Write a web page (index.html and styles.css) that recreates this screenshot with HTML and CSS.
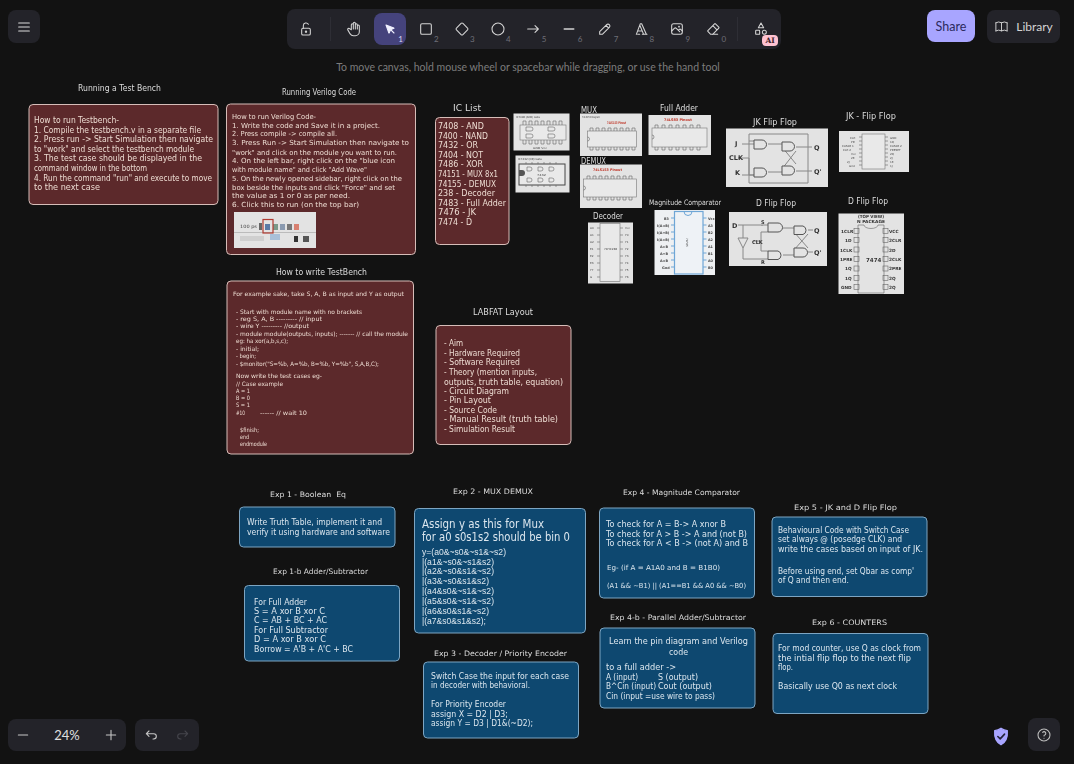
FILE: index.html
```html
<!DOCTYPE html>
<html lang="en">
<head>
<meta charset="utf-8">
<title>Whiteboard</title>
<link rel="stylesheet" href="styles.css">
</head>
<body>
<div class="app">
<svg class="canvas" width="1074" height="764" viewBox="0 0 1074 764">
  <!-- red note boxes -->
  <rect class="red" x="29" y="104.500" width="189" height="100" rx="4"/>
  <rect class="red" x="226.500" y="104" width="189" height="150.500" rx="4"/>
  <rect class="red" x="227" y="281" width="186.500" height="173" rx="4"/>
  <rect class="red" x="436" y="325.500" width="135" height="119" rx="4"/>
  <rect class="red" x="435.500" y="117.500" width="73.500" height="127" rx="4"/>
  <!-- blue note boxes -->
  <rect class="blue" x="239.500" y="507" width="155.500" height="40" rx="4"/>
  <rect class="blue" x="244.500" y="585.500" width="155" height="75.500" rx="4"/>
  <rect class="blue" x="414.500" y="508.500" width="171" height="124.500" rx="4"/>
  <rect class="blue" x="423.500" y="662" width="155" height="76" rx="4"/>
  <rect class="blue" x="599.500" y="508" width="155" height="90" rx="4"/>
  <rect class="blue" x="600" y="628" width="155" height="80" rx="4"/>
  <rect class="blue" x="772" y="517" width="155" height="79.500" rx="4"/>
  <rect class="blue" x="773" y="633.500" width="155" height="80" rx="4"/>

  <!-- headings -->
  <g class="lab">
    <text x="78" y="91" textLength="83" lengthAdjust="spacingAndGlyphs">Running a Test Bench</text>
    <text x="282" y="95" textLength="74" lengthAdjust="spacingAndGlyphs">Running Verilog Code</text>
    <text x="276" y="275" textLength="91" lengthAdjust="spacingAndGlyphs">How to write TestBench</text>
    <text x="473" y="315" textLength="60" lengthAdjust="spacingAndGlyphs">LABFAT Layout</text>
    <text x="453" y="111" textLength="28" lengthAdjust="spacingAndGlyphs">IC List</text>
    <text x="581" y="113" textLength="16" lengthAdjust="spacingAndGlyphs">MUX</text>
    <text x="581" y="164" textLength="25" lengthAdjust="spacingAndGlyphs">DEMUX</text>
    <text x="660" y="111" textLength="38" lengthAdjust="spacingAndGlyphs">Full Adder</text>
    <text x="593" y="219" textLength="30" lengthAdjust="spacingAndGlyphs">Decoder</text>
    <text x="649" y="205" textLength="72" lengthAdjust="spacingAndGlyphs" class="sm">Magnitude Comparator</text>
    <text x="753" y="125" textLength="44" lengthAdjust="spacingAndGlyphs">JK Flip Flop</text>
    <text x="846" y="119" textLength="50" lengthAdjust="spacingAndGlyphs">JK - Flip Flop</text>
    <text x="756" y="206" textLength="40" lengthAdjust="spacingAndGlyphs">D Flip Flop</text>
    <text x="848" y="204" textLength="40" lengthAdjust="spacingAndGlyphs">D Flip Flop</text>
    <text x="270" y="497" textLength="76" lengthAdjust="spacingAndGlyphs" class="sm">Exp 1 - Boolean  Eq</text>
    <text x="273" y="574" textLength="95" lengthAdjust="spacingAndGlyphs" class="sm">Exp 1-b Adder/Subtractor</text>
    <text x="453" y="494" textLength="80" lengthAdjust="spacingAndGlyphs" class="sm">Exp 2 - MUX DEMUX</text>
    <text x="434" y="656" textLength="133" lengthAdjust="spacingAndGlyphs" class="sm">Exp 3 - Decoder / Priority Encoder</text>
    <text x="623" y="495" textLength="117" lengthAdjust="spacingAndGlyphs" class="sm">Exp 4 - Magnitude Comparator</text>
    <text x="794" y="510" textLength="103" lengthAdjust="spacingAndGlyphs" class="sm">Exp 5 - JK and D Flip Flop</text>
    <text x="610" y="620" textLength="136" lengthAdjust="spacingAndGlyphs" class="sm">Exp 4-b - Parallel Adder/Subtractor</text>
    <text x="812" y="625" textLength="75" lengthAdjust="spacingAndGlyphs" class="sm">Exp 6 - COUNTERS</text>
  </g>

  <!-- Running a Test Bench -->
  <g class="rt f8">
    <text x="34" y="122.500" textLength="85" lengthAdjust="spacingAndGlyphs">How to run Testbench-</text>
    <text x="34" y="132.500" textLength="167" lengthAdjust="spacingAndGlyphs">1. Compile the testbench.v in a separate file</text>
    <text x="34" y="142" textLength="179" lengthAdjust="spacingAndGlyphs">2. Press run -&gt; Start Simulation then navigate</text>
    <text x="34" y="151.500" textLength="160" lengthAdjust="spacingAndGlyphs">to "work" and select the testbench module</text>
    <text x="34" y="161" textLength="168" lengthAdjust="spacingAndGlyphs">3. The test case should be displayed in the</text>
    <text x="34" y="170.500" textLength="113" lengthAdjust="spacingAndGlyphs">command window in the bottom</text>
    <text x="34" y="180.500" textLength="178" lengthAdjust="spacingAndGlyphs">4. Run the command "run" and execute to move</text>
    <text x="34" y="190" textLength="66" lengthAdjust="spacingAndGlyphs">to the next case</text>
  </g>

  <!-- Running Verilog Code -->
  <g class="rt f7">
    <text x="232" y="118.500" textLength="84" lengthAdjust="spacingAndGlyphs">How to run Verilog Code-</text>
    <text x="232" y="127.500" textLength="148" lengthAdjust="spacingAndGlyphs">1. Write the code and Save it in a project.</text>
    <text x="232" y="136" textLength="105" lengthAdjust="spacingAndGlyphs">2. Press compile -&gt; compile all.</text>
    <text x="232" y="145" textLength="177" lengthAdjust="spacingAndGlyphs">3. Press Run -&gt; Start Simulation then navigate to</text>
    <text x="232" y="154.500" textLength="165" lengthAdjust="spacingAndGlyphs">"work" and click on the module you want to run.</text>
    <text x="232" y="163" textLength="163" lengthAdjust="spacingAndGlyphs">4. On the left bar, right click on the "blue icon</text>
    <text x="232" y="172" textLength="135" lengthAdjust="spacingAndGlyphs">with module name" and click "Add Wave"</text>
    <text x="232" y="181" textLength="170" lengthAdjust="spacingAndGlyphs">5. On the newly opened sidebar, right click on the</text>
    <text x="232" y="190" textLength="163" lengthAdjust="spacingAndGlyphs">box beside the inputs and click "Force" and set</text>
    <text x="232" y="198" textLength="118" lengthAdjust="spacingAndGlyphs">the value as 1 or 0 as per need.</text>
    <text x="232" y="207" textLength="127" lengthAdjust="spacingAndGlyphs">6. Click this to run (on the top bar)</text>
  </g>

  <!-- simulator toolbar screenshot -->
  <rect class="paper" x="234" y="212" width="82" height="36"/>
  <rect x="234" y="232" width="82" height="1" fill="#bbb"/>
  <text class="tiny shot" x="240" y="228" textLength="17" lengthAdjust="spacingAndGlyphs">100 ps</text>
  <rect x="259" y="223" width="3" height="7" fill="#666"/>
  <rect x="265" y="224" width="5" height="6" fill="#5a7aa6"/>
  <rect x="273" y="224" width="5" height="6" fill="#7a9a8a"/>
  <rect x="280" y="224" width="5" height="6" fill="#8a9ab0"/>
  <rect x="287" y="224" width="5" height="6" fill="#777"/>
  <rect x="294" y="224" width="5" height="6" fill="#d88070"/>
  <rect class="mark" x="263" y="219.500" width="10" height="13.500"/>
  <rect x="270" y="234" width="10" height="6" fill="#a9c0d9"/>
  <rect x="240" y="236" width="24" height="5" fill="#cfcfcf"/>
  <rect x="294" y="236" width="4" height="6" fill="#333"/>
  <rect x="303" y="236" width="6" height="6" fill="#555"/>

  <!-- How to write TestBench -->
  <g class="rt f6">
    <text x="233" y="296" textLength="171" lengthAdjust="spacingAndGlyphs">For example sake, take S, A, B as input and Y as output</text>
    <text x="236" y="314" textLength="126" lengthAdjust="spacingAndGlyphs">- Start with module name with no brackets</text>
    <text x="236" y="321" textLength="86" lengthAdjust="spacingAndGlyphs">- reg S, A, B --------- // input</text>
    <text x="236" y="328" textLength="73" lengthAdjust="spacingAndGlyphs">- wire Y --------- //output</text>
    <text x="236" y="336" textLength="172" lengthAdjust="spacingAndGlyphs">- module module(outputs, inputs); ------- // call the module</text>
    <text x="236" y="343" textLength="52" lengthAdjust="spacingAndGlyphs">eg: ha xor(a,b,s,c);</text>
    <text x="236" y="351" textLength="23" lengthAdjust="spacingAndGlyphs">- initial;</text>
    <text x="236" y="358" textLength="20" lengthAdjust="spacingAndGlyphs">- begin;</text>
    <text x="236" y="366" textLength="143" lengthAdjust="spacingAndGlyphs">- $monitor("S=%b, A=%b, B=%b, Y=%b", S,A,B,C);</text>
    <text x="236" y="378" textLength="86" lengthAdjust="spacingAndGlyphs">Now write the test cases eg-</text>
    <text x="236" y="386" textLength="47" lengthAdjust="spacingAndGlyphs">// Case example</text>
    <text x="236" y="393" textLength="14" lengthAdjust="spacingAndGlyphs">A = 1</text>
    <text x="236" y="400" textLength="14" lengthAdjust="spacingAndGlyphs">B = 0</text>
    <text x="236" y="407" textLength="14" lengthAdjust="spacingAndGlyphs">S = 1</text>
    <text x="236" y="415" textLength="9" lengthAdjust="spacingAndGlyphs">#10</text>
    <text x="260" y="415" textLength="47" lengthAdjust="spacingAndGlyphs">------ // wait 10</text>
    <text x="240" y="432" textLength="19" lengthAdjust="spacingAndGlyphs">$finish;</text>
    <text x="240" y="439" textLength="9" lengthAdjust="spacingAndGlyphs">end</text>
    <text x="240" y="446" textLength="27" lengthAdjust="spacingAndGlyphs">endmodule</text>
  </g>

  <!-- LABFAT Layout -->
  <g class="rt f8">
    <text x="444" y="346" textLength="19" lengthAdjust="spacingAndGlyphs">- Aim</text>
    <text x="444" y="356" textLength="76" lengthAdjust="spacingAndGlyphs">- Hardware Required</text>
    <text x="444" y="365" textLength="76" lengthAdjust="spacingAndGlyphs">- Software Required</text>
    <text x="444" y="375" textLength="93" lengthAdjust="spacingAndGlyphs">- Theory (mention inputs,</text>
    <text x="444" y="385" textLength="119" lengthAdjust="spacingAndGlyphs">outputs, truth table, equation)</text>
    <text x="444" y="394" textLength="65" lengthAdjust="spacingAndGlyphs">- Circuit Diagram</text>
    <text x="444" y="403" textLength="47" lengthAdjust="spacingAndGlyphs">- Pin Layout</text>
    <text x="444" y="413" textLength="53" lengthAdjust="spacingAndGlyphs">- Source Code</text>
    <text x="444" y="422" textLength="114" lengthAdjust="spacingAndGlyphs">- Manual Result (truth table)</text>
    <text x="444" y="432" textLength="71" lengthAdjust="spacingAndGlyphs">- Simulation Result</text>
  </g>

  <!-- IC List -->
  <g class="rt f9">
    <text x="438" y="129" textLength="46" lengthAdjust="spacingAndGlyphs">7408 - AND</text>
    <text x="438" y="139" textLength="50" lengthAdjust="spacingAndGlyphs">7400 - NAND</text>
    <text x="438" y="148" textLength="40" lengthAdjust="spacingAndGlyphs">7432 - OR</text>
    <text x="438" y="158" textLength="45" lengthAdjust="spacingAndGlyphs">7404 - NOT</text>
    <text x="438" y="167" textLength="45" lengthAdjust="spacingAndGlyphs">7486 - XOR</text>
    <text x="438" y="177" textLength="60" lengthAdjust="spacingAndGlyphs">74151 - MUX 8x1</text>
    <text x="438" y="187" textLength="58" lengthAdjust="spacingAndGlyphs">74155 - DEMUX</text>
    <text x="438" y="196" textLength="57" lengthAdjust="spacingAndGlyphs">238 - Decoder</text>
    <text x="438" y="206" textLength="68" lengthAdjust="spacingAndGlyphs">7483 - Full Adder</text>
    <text x="438" y="215" textLength="38" lengthAdjust="spacingAndGlyphs">7476 - JK</text>
    <text x="438" y="225" textLength="34" lengthAdjust="spacingAndGlyphs">7474 - D</text>
  </g>

  <!-- Blue notes -->
  <g class="bt f8">
    <text x="247" y="525" textLength="135" lengthAdjust="spacingAndGlyphs">Write Truth Table, implement it and</text>
    <text x="247" y="535" textLength="143" lengthAdjust="spacingAndGlyphs">verify it using hardware and software</text>

    <text x="254" y="605" textLength="53" lengthAdjust="spacingAndGlyphs">For Full Adder</text>
    <text x="254" y="614" textLength="71" lengthAdjust="spacingAndGlyphs">S = A xor B xor C</text>
    <text x="254" y="623" textLength="73" lengthAdjust="spacingAndGlyphs">C = AB + BC + AC</text>
    <text x="254" y="633" textLength="74" lengthAdjust="spacingAndGlyphs">For Full Subtractor</text>
    <text x="254" y="642" textLength="72" lengthAdjust="spacingAndGlyphs">D = A xor B xor C</text>
    <text x="254" y="652" textLength="99" lengthAdjust="spacingAndGlyphs">Borrow = A'B + A'C + BC</text>

    <text x="431" y="679" textLength="138" lengthAdjust="spacingAndGlyphs">Switch Case the input for each case</text>
    <text x="431" y="688" textLength="99" lengthAdjust="spacingAndGlyphs">in decoder with behavioral.</text>
    <text x="431" y="707" textLength="75" lengthAdjust="spacingAndGlyphs">For Priority Encoder</text>
    <text x="431" y="717" textLength="77" lengthAdjust="spacingAndGlyphs">assign X = D2 | D3;</text>
    <text x="431" y="726" textLength="102" lengthAdjust="spacingAndGlyphs">assign Y = D3 | D1&amp;(~D2);</text>

    <text x="606" y="527" textLength="120" lengthAdjust="spacingAndGlyphs">To check for A = B-&gt; A xnor B</text>
    <text x="606" y="537" textLength="141" lengthAdjust="spacingAndGlyphs">To check for A &gt; B -&gt; A and (not B)</text>
    <text x="606" y="546" textLength="142" lengthAdjust="spacingAndGlyphs">To check for A &lt; B -&gt; (not A) and B</text>
    <text x="607" y="570" textLength="113" lengthAdjust="spacingAndGlyphs" class="f7">Eg- (if A = A1A0 and B = B1B0)</text>
    <text x="607" y="588" textLength="139" lengthAdjust="spacingAndGlyphs" class="f7">(A1 &amp;&amp; ~B1) || (A1==B1 &amp;&amp; A0 &amp;&amp; ~B0)</text>

    <text x="609" y="644" textLength="139" lengthAdjust="spacingAndGlyphs">Learn the pin diagram and Verilog</text>
    <text x="669" y="655" textLength="19" lengthAdjust="spacingAndGlyphs">code</text>
    <text x="606" y="670" textLength="70" lengthAdjust="spacingAndGlyphs">to a full adder -&gt;</text>
    <text x="606" y="680" textLength="32" lengthAdjust="spacingAndGlyphs">A (input)</text>
    <text x="658" y="680" textLength="40" lengthAdjust="spacingAndGlyphs">S (output)</text>
    <text x="606" y="689" textLength="50" lengthAdjust="spacingAndGlyphs">B^Cin (input)</text>
    <text x="658" y="689" textLength="54" lengthAdjust="spacingAndGlyphs">Cout (output)</text>
    <text x="606" y="699" textLength="109" lengthAdjust="spacingAndGlyphs">Cin (input =use wire to pass)</text>

    <text x="778" y="533" textLength="131" lengthAdjust="spacingAndGlyphs">Behavioural Code with Switch Case</text>
    <text x="778" y="542" textLength="124" lengthAdjust="spacingAndGlyphs">set always @ (posedge CLK) and</text>
    <text x="778" y="552" textLength="145" lengthAdjust="spacingAndGlyphs">write the cases based on input of JK.</text>
    <text x="778" y="574" textLength="136" lengthAdjust="spacingAndGlyphs">Before using end, set Qbar as comp'</text>
    <text x="778" y="583" textLength="71" lengthAdjust="spacingAndGlyphs">of Q and then end.</text>

    <text x="778" y="651" textLength="143" lengthAdjust="spacingAndGlyphs">For mod counter, use Q as clock from</text>
    <text x="778" y="661" textLength="133" lengthAdjust="spacingAndGlyphs">the intial flip flop to the next flip</text>
    <text x="778" y="670" textLength="15" lengthAdjust="spacingAndGlyphs">flop.</text>
    <text x="778" y="689" textLength="119" lengthAdjust="spacingAndGlyphs">Basically use Q0 as next clock</text>
  </g>

  <!-- Exp 2 -->
  <g class="bt big">
    <text x="422" y="528" textLength="122" lengthAdjust="spacingAndGlyphs">Assign y as this for Mux</text>
    <text x="422" y="541" textLength="148" lengthAdjust="spacingAndGlyphs">for a0 s0s1s2 should be bin 0</text>
  </g>
  <g class="code">
    <text x="422" y="555" textLength="84" lengthAdjust="spacingAndGlyphs">y=(a0&amp;~s0&amp;~s1&amp;~s2)</text>
    <text x="422" y="565" textLength="72" lengthAdjust="spacingAndGlyphs">|(a1&amp;~s0&amp;~s1&amp;s2)</text>
    <text x="422" y="574" textLength="72" lengthAdjust="spacingAndGlyphs">|(a2&amp;~s0&amp;s1&amp;~s2)</text>
    <text x="422" y="584" textLength="67" lengthAdjust="spacingAndGlyphs">|(a3&amp;~s0&amp;s1&amp;s2)</text>
    <text x="422" y="594" textLength="72" lengthAdjust="spacingAndGlyphs">|(a4&amp;s0&amp;~s1&amp;~s2)</text>
    <text x="422" y="604" textLength="72" lengthAdjust="spacingAndGlyphs">|(a5&amp;s0&amp;~s1&amp;~s2)</text>
    <text x="422" y="614" textLength="67" lengthAdjust="spacingAndGlyphs">|(a6&amp;s0&amp;s1&amp;~s2)</text>
    <text x="422" y="624" textLength="64" lengthAdjust="spacingAndGlyphs">|(a7&amp;s0&amp;s1&amp;s2);</text>
  </g>

  <!-- Picture: 7408 gates -->
  <rect class="paper" x="513.500" y="113.500" width="56" height="37"/>
  <text class="tiny dk" x="516" y="118" textLength="24" lengthAdjust="spacingAndGlyphs">IC7408 (AND) Gate</text>
  <rect class="ic" x="520" y="125" width="46" height="15"/>
  <path class="ln" d="M523 125v-4h3v4M529 125v-4h3v4M535 125v-4h3v4M541 125v-4h3v4M547 125v-4h3v4M553 125v-4h3v4M559 125v-4h3v4M523 140v4h3v-4M529 140v4h3v-4M535 140v4h3v-4M541 140v4h3v-4M547 140v4h3v-4M553 140v4h3v-4M559 140v4h3v-4"/>
  <path class="ln" d="M526 131h5a2 2 0 0 0 0-4h-5zM548 131h5a2 2 0 0 0 0-4h-5zM526 138h5a2 2 0 0 0 0-4h-5zM548 138h5a2 2 0 0 0 0-4h-5z"/>
  <text class="tiny dk" x="533" y="148.500" textLength="14" lengthAdjust="spacingAndGlyphs">GND Vcc</text>

  <!-- Picture: 7432 gates -->
  <rect class="paper" x="515.500" y="155.500" width="54" height="37"/>
  <text class="tiny dk" x="518" y="160" textLength="24" lengthAdjust="spacingAndGlyphs">IC7432 (OR) Gate</text>
  <rect class="ic thick" x="519" y="164" width="46" height="21"/>
  <path d="M519 170h3a3 3 0 0 1 0 6h-3z" fill="#555"/>
  <path class="ln" d="M526 164v-2M532 164v-2M538 164v-2M544 164v-2M550 164v-2M556 164v-2M526 185v2M532 185v2M538 185v2M544 185v2M550 185v2M556 185v2"/>
  <path class="ln" d="M527 167h3a2 2 0 0 1 0 4h-3zM538 167h3a2 2 0 0 1 0 4h-3zM549 167h3a2 2 0 0 1 0 4h-3zM527 178h3a2 2 0 0 1 0 4h-3zM538 178h3a2 2 0 0 1 0 4h-3zM549 178h3a2 2 0 0 1 0 4h-3z"/>
  <text class="tiny dk" x="537" y="175.500" textLength="9" lengthAdjust="spacingAndGlyphs">7432</text>

  <!-- Picture: MUX pinout -->
  <rect class="paper" x="580" y="113.500" width="62" height="42.500"/>
  <text class="tiny dk" x="582" y="118" textLength="18" lengthAdjust="spacingAndGlyphs">74LS153 Diagram</text>
  <text class="pin-title" x="607" y="124" textLength="19" lengthAdjust="spacingAndGlyphs">74LS153 Pinout</text>
  <rect class="ic" x="587.500" y="131" width="49" height="16"/>
  <path class="ln" d="M590 131v-3h3v3M596 131v-3h3v3M602 131v-3h3v3M608 131v-3h3v3M614 131v-3h3v3M620 131v-3h3v3M626 131v-3h3v3M632 131v-3h3v3M590 147v3h3v-3M596 147v3h3v-3M602 147v3h3v-3M608 147v3h3v-3M614 147v3h3v-3M620 147v3h3v-3M626 147v3h3v-3M632 147v3h3v-3"/>
  <path class="ln" d="M587.500 137a2 2 0 0 1 0 4"/>

  <!-- Picture: DEMUX pinout -->
  <rect class="paper" x="580" y="164.500" width="62" height="43.500"/>
  <text class="pin-title" x="593" y="171" textLength="29" lengthAdjust="spacingAndGlyphs">74LS153 Pinout</text>
  <rect class="ic" x="583.500" y="179" width="53" height="18"/>
  <path class="ln" d="M587 179v-3h3v3M593 179v-3h3v3M599 179v-3h3v3M605 179v-3h3v3M611 179v-3h3v3M617 179v-3h3v3M623 179v-3h3v3M629 179v-3h3v3M587 197v3h3v-3M593 197v3h3v-3M599 197v3h3v-3M605 197v3h3v-3M611 197v3h3v-3M617 197v3h3v-3M623 197v3h3v-3M629 197v3h3v-3"/>
  <path class="ln" d="M583.500 186a2 2 0 0 1 0 4"/>

  <!-- Picture: Full adder pinout -->
  <rect class="paper" x="648.500" y="115" width="62.500" height="40"/>
  <text class="pin-title" x="664" y="121" textLength="28" lengthAdjust="spacingAndGlyphs">74LS83 Pinout</text>
  <rect class="ic" x="652" y="128" width="55" height="19"/>
  <path class="ln" d="M655 128v-3h3v3M662 128v-3h3v3M669 128v-3h3v3M676 128v-3h3v3M683 128v-3h3v3M690 128v-3h3v3M697 128v-3h3v3M655 147v3h3v-3M662 147v3h3v-3M669 147v3h3v-3M676 147v3h3v-3M683 147v3h3v-3M690 147v3h3v-3M697 147v3h3v-3"/>
  <path class="ln" d="M652 135a2 2 0 0 1 0 4"/>

  <!-- Picture: Decoder -->
  <rect class="paper" x="588" y="222.500" width="45" height="61"/>
  <rect class="ic" x="600" y="223.500" width="20" height="58"/>
  <text class="tiny dk" x="604" y="250" textLength="13" lengthAdjust="spacingAndGlyphs">74HC238</text>
  <path class="ln" d="M597 228h3M597 235h3M597 242h3M597 249h3M597 256h3M597 263h3M597 270h3M597 277h3M620 228h3M620 235h3M620 242h3M620 249h3M620 256h3M620 263h3M620 270h3M620 277h3"/>
  <g class="tiny dk">
    <text x="590" y="229">A0</text><text x="590" y="236">A1</text><text x="590" y="243">A2</text><text x="590" y="250">E1</text><text x="590" y="257">E2</text><text x="590" y="264">E3</text><text x="590" y="271">Y7</text><text x="590" y="278">G</text>
    <text x="625" y="229">Vcc</text><text x="625" y="236">Y0</text><text x="625" y="243">Y1</text><text x="625" y="250">Y2</text><text x="625" y="257">Y3</text><text x="625" y="264">Y4</text><text x="625" y="271">Y5</text><text x="625" y="278">Y6</text>
  </g>

  <!-- Picture: Magnitude comparator -->
  <rect class="paper light" x="654.500" y="210" width="60.500" height="65"/>
  <rect class="icb" x="674.500" y="211.500" width="28.500" height="62.500"/>
  <path class="lnb" d="M684 211.500a4 4 0 0 0 8 0"/>
  <text class="tiny bl" x="685" y="243" transform="rotate(90 688 241)">74F85</text>
  <path class="lnb" d="M671 218h3.500M671 225h3.500M671 232h3.500M671 239h3.500M671 246h3.500M671 253h3.500M671 260h3.500M671 267h3.500M703 218h3.500M703 225h3.500M703 232h3.500M703 239h3.500M703 246h3.500M703 253h3.500M703 260h3.500M703 267h3.500"/>
  <g class="tiny dk b">
    <text x="664" y="219.500">B3</text><text x="657" y="226.500">I(A&lt;B)</text><text x="657" y="233.500">I(A=B)</text><text x="657" y="240.500">I(A&gt;B)</text><text x="660" y="247.500">A&gt;B</text><text x="660" y="254.500">A=B</text><text x="660" y="261.500">A&lt;B</text><text x="662" y="268.500">Gnd</text>
    <text x="708" y="219.500">Vcc</text><text x="708" y="226.500">A3</text><text x="708" y="233.500">B2</text><text x="708" y="240.500">A2</text><text x="708" y="247.500">A1</text><text x="708" y="254.500">B1</text><text x="708" y="261.500">A0</text><text x="708" y="268.500">B0</text>
  </g>

  <!-- Picture: JK flip flop -->
  <rect class="paper" x="726" y="128.500" width="102" height="58.500"/>
  <path class="wire" d="M749 164V134h59v49h-59zM742 144h12M749 141h5M749 158V175h5M738 158h11M742 175h12M768 144h14M768 172h14M796 147h16M796 171h16M782 147l14 17M782 169l14 -18"/>
  <path class="gate" d="M754 140h8a4.500 4.500 0 0 1 0 9h-8zM754 168h8a4.500 4.500 0 0 1 0 9h-8zM782 142h8a4.500 4.500 0 0 1 0 9h-8zM782 166h8a4.500 4.500 0 0 1 0 9h-8z"/>
  <g class="cir">
    <text x="735" y="146">J</text><text x="729" y="160">CLK</text><text x="735" y="175">K</text><text x="814" y="149.500">Q</text><text x="814" y="173.500">Q'</text>
  </g>

  <!-- Picture: JK pinout -->
  <rect class="paper" x="839" y="131" width="70" height="41"/>
  <rect class="ic" x="862" y="134" width="23" height="35"/>
  <path class="ln" d="M859 137h3M859 141h3M859 145h3M859 149h3M859 153h3M859 157h3M859 161h3M859 165h3M885 137h3M885 141h3M885 145h3M885 149h3M885 153h3M885 157h3M885 161h3M885 165h3"/>
  <g class="tiny dk">
    <text x="850" y="138.500">CLK</text><text x="851" y="142.500">PR</text><text x="842" y="146.500">CLEAR 1</text><text x="843" y="150.500">CLK 2</text><text x="851" y="154.500">Vcc</text><text x="851" y="158.500">2K</text><text x="847" y="162.500">2J</text><text x="849" y="166.500">Gnd</text>
    <text x="890" y="138.500">GND</text><text x="890" y="142.500">1Q</text><text x="890" y="146.500">CLEAR 2</text><text x="890" y="150.500">PRESET</text><text x="890" y="154.500">2Q</text><text x="890" y="158.500">2J</text><text x="890" y="162.500">1K</text><text x="890" y="166.500">1J</text>
  </g>

  <!-- Picture: D flip flop -->
  <rect class="paper" x="729" y="212" width="98" height="54"/>
  <path class="wire" d="M738 225H768M743 225V238M743 248V259H768M762 225V226M753 241H761M761 241V232H768M761 241V251H768M783 228h11M783 255h11M808 230h5M808 252h5M794 232l14 16M794 250l14 -16"/>
  <path class="wire" d="M738 238h10l-5 10z"/>
  <path class="gate" d="M768 223h10a4.500 4.500 0 0 1 0 9h-10zM768 251h10a4.500 4.500 0 0 1 0 8.500h-10zM794 226h9a4.500 4.500 0 0 1 0 8.500h-9zM794 248h9a4.500 4.500 0 0 1 0 9h-9z"/>
  <g class="cir">
    <text x="732" y="228">D</text><text x="752" y="243.500" class="s">CLK</text><text x="761" y="224" class="s">S</text><text x="761" y="263.500" class="s">R</text><text x="814" y="232.500">Q</text><text x="814" y="254.500">Q'</text>
  </g>

  <!-- Picture: 7474 pinout -->
  <rect class="paper" x="838.500" y="213.500" width="65.500" height="80.500"/>
  <text class="hd" x="858" y="218" textLength="26" lengthAdjust="spacingAndGlyphs">(TOP VIEW)</text>
  <text class="hd" x="857" y="223" textLength="28" lengthAdjust="spacingAndGlyphs">N PACKAGE</text>
  <path class="ln" d="M858 225v68M884 225v68M858 225h6a6 3 0 0 0 14 0h6M858 293h26"/>
  <g class="ln">
    <rect x="854" y="228.500" width="5" height="5"/><rect x="854" y="237.500" width="5" height="5"/><rect x="854" y="247" width="5" height="5"/><rect x="854" y="256.500" width="5" height="5"/><rect x="854" y="266" width="5" height="5"/><rect x="854" y="275.500" width="5" height="5"/><rect x="854" y="284.500" width="5" height="5"/>
    <rect x="883" y="228.500" width="5" height="5"/><rect x="883" y="237.500" width="5" height="5"/><rect x="883" y="247" width="5" height="5"/><rect x="883" y="256.500" width="5" height="5"/><rect x="883" y="266" width="5" height="5"/><rect x="883" y="275.500" width="5" height="5"/><rect x="883" y="284.500" width="5" height="5"/>
  </g>
  <g class="hd">
    <text x="841" y="233">1CLR</text><text x="845" y="242">1D</text><text x="840" y="252">1CLK</text><text x="840" y="261">1PRE</text><text x="845" y="270">1Q</text><text x="845" y="280">1Q</text><text x="841" y="289">GND</text>
    <text x="889" y="233">VCC</text><text x="889" y="242">2CLR</text><text x="889" y="252">2D</text><text x="889" y="261">2CLK</text><text x="889" y="270">2PRE</text><text x="889" y="280">2Q</text><text x="889" y="289">2Q</text>
  </g>
  <text class="num" x="866" y="261.500">7474</text>
</svg>

<header class="top">
  <button class="island menu" aria-label="Menu">
    <svg viewBox="0 0 24 24"><path d="M4 6h16M4 12h16M4 18h16"/></svg>
  </button>
  <div class="center">
    <nav class="toolbar">
      <span class="tool"><svg viewBox="0 0 24 24"><rect x="5.500" y="11" width="13" height="10" rx="2"/><circle cx="12" cy="16" r="1"/><path d="M8 11V7a4 4 0 0 1 7.500-2"/></svg></span>
      <i class="sep"></i>
      <span class="tool"><svg viewBox="0 0 24 24"><path d="M8 13V5.500a1.500 1.500 0 0 1 3 0V12M11 5.500v-2a1.500 1.500 0 1 1 3 0V12M14 5.500a1.500 1.500 0 0 1 3 0V12M17 7.500a1.500 1.500 0 0 1 3 0V16a6 6 0 0 1-6 6h-2.800a6 6 0 0 1-5-2.700l-.2-.3c-.3-.5-1.400-2.400-3.300-5.700a1.500 1.500 0 0 1 .5-2 1.900 1.900 0 0 1 2.300.3L8 13"/></svg></span>
      <span class="tool on"><svg viewBox="0 0 24 24"><path class="fill" d="M6 6l4.200 11.800c.1.300.5.300.6 0l2.200-4.800 4.800-2c.3-.1.300-.5 0-.6z"/><path d="M13.500 13.500l4.500 4.500"/></svg><b>1</b></span>
      <span class="tool"><svg viewBox="0 0 24 24"><rect x="4" y="4" width="16" height="16" rx="2"/></svg><b>2</b></span>
      <span class="tool"><svg viewBox="0 0 24 24"><path d="M10.600 3.700 3.700 10.600a2 2 0 0 0 0 2.800l6.900 6.900a2 2 0 0 0 2.800 0l6.900-6.900a2 2 0 0 0 0-2.800l-6.900-6.900a2 2 0 0 0-2.800 0z"/></svg><b>3</b></span>
      <span class="tool"><svg viewBox="0 0 24 24"><circle cx="12" cy="12" r="9"/></svg><b>4</b></span>
      <span class="tool"><svg viewBox="0 0 24 24"><path d="M4 12h16M15 17l5-5-5-5"/></svg><b>5</b></span>
      <span class="tool"><svg viewBox="0 0 24 24"><path class="thick" d="M5 12h14"/></svg><b>6</b></span>
      <span class="tool"><svg viewBox="0 0 24 24"><path d="M4 20h4L18.500 9.500a2.800 2.800 0 0 0-4-4L4 16zM13.500 6.500l4 4"/></svg><b>7</b></span>
      <span class="tool"><svg viewBox="0 0 24 24"><path d="M7 20h3M14 20h7M6.900 15h6.900M10.200 6.300 16 20M5 20l6-16h2l7 16"/></svg><b>8</b></span>
      <span class="tool"><svg viewBox="0 0 24 24"><rect x="4" y="4" width="16" height="16" rx="3"/><circle cx="15" cy="8.500" r=".6"/><path d="M4 15l4-4c1-1 2-1 3 0l5 5M14 14l1-1c1-1 2-1 3 0l2 2"/></svg><b>9</b></span>
      <span class="tool"><svg viewBox="0 0 24 24"><path d="M19 20H8.500l-4.200-4.300a1 1 0 0 1 0-1.400l10-10a1 1 0 0 1 1.400 0l5 5a1 1 0 0 1 0 1.400L11.500 20M18 13.300 11.700 7"/></svg><b>0</b></span>
      <i class="sep"></i>
      <span class="tool"><svg viewBox="0 0 24 24"><path d="M12 3l4 7H8z"/><rect x="4" y="14" width="6" height="6" rx="1"/><circle cx="17" cy="17" r="3"/></svg><em class="ai">AI</em></span>
    </nav>
    <p class="hint">To move canvas, hold mouse wheel or spacebar while dragging, or use the hand tool</p>
  </div>
  <div class="actions">
    <button class="share">Share</button>
    <button class="island library"><svg viewBox="0 0 24 24"><path d="M3 19a9 9 0 0 1 9 0 9 9 0 0 1 9 0M3 6a9 9 0 0 1 9 0 9 9 0 0 1 9 0M3 6v13M12 6v13M21 6v13"/></svg>Library</button>
  </div>
</header>

<footer class="bottom">
  <div class="island group zoom">
    <span class="ctl"><svg viewBox="0 0 24 24"><path d="M5 12h14"/></svg></span>
    <span class="pct">24%</span>
    <span class="ctl"><svg viewBox="0 0 24 24"><path d="M12 5v14M5 12h14"/></svg></span>
  </div>
  <div class="island group history">
    <span class="ctl"><svg viewBox="0 0 24 24"><path d="M9 14l-4-4 4-4M5 10h11a4 4 0 1 1 0 8h-1"/></svg></span>
    <span class="ctl off"><svg viewBox="0 0 24 24"><path d="M15 14l4-4-4-4M19 10H8a4 4 0 1 0 0 8h1"/></svg></span>
  </div>
  <svg class="shield" viewBox="0 0 20 24"><path class="sh" d="M10 1.500c2.500 1.800 5 2.800 8 3 .5 7-.5 14-8 18-7.500-4-8.500-11-8-18 3-.2 5.500-1.200 8-3z"/><path class="ck" d="M6 12l3 3 5.500-6"/></svg>
  <button class="island help" aria-label="Help"><svg viewBox="0 0 24 24"><circle cx="12" cy="12" r="9"/><path d="M12 17v.01M12 13.500a1.500 1.500 0 0 1 1-1.500 2.600 2.600 0 1 0-3-4"/></svg></button>
</footer>
</div>
</body>
</html>
```
FILE: styles.css
```css
* { box-sizing: border-box; }
html, body { margin: 0; padding: 0; height: 100%; overflow: hidden; background: #121212; }
.app { position: relative; width: 1074px; height: 764px; background: #121212; font-family: "Lato", sans-serif; color: #dcdcdc; overflow: hidden; }

/* free canvas */
.canvas { position: absolute; inset: 0; display: block; filter: blur(.3px); }
.canvas text { font-family: "DejaVu Sans", sans-serif; white-space: pre; }
.red { fill: #5c292b; stroke: #d6bdb8; stroke-width: 1; }
.blue { fill: #0e4870; stroke: #7da5c2; stroke-width: 1; }
.lab { fill: #dcdcdc; font-size: 8px; }
.lab .sm { font-size: 7.500px; }
.rt { fill: #eddcd2; }
.bt { fill: #dbe6ee; }
.f6 { font-size: 6px; }
.f7 { font-size: 7px; }
.f8 { font-size: 8px; }
.f9 { font-size: 9px; }
.big { font-size: 12px; }
.canvas .code text { font-family: "Liberation Sans", sans-serif; font-size: 9.500px; fill: #dbe6ee; }
.paper { fill: #e3e3e3; }
.paper.light { fill: #eef0f2; }
.ic { fill: #e9e9e9; stroke: #777; stroke-width: .6; }
.ic.thick { stroke: #444; stroke-width: 1; }
.ln { fill: none; stroke: #666; stroke-width: .6; }
.mark { fill: none; stroke: #b03a30; stroke-width: 1.200; }
.tiny { font-size: 2.800px; fill: #666; }
.tiny.shot { font-size: 4.500px; fill: #444; }
.tiny.dk, .dk text { fill: #444; }
.tiny.b text { font-weight: bold; font-size: 3.400px; }
.tiny.bl { fill: #333; }
.pin-title { font-size: 3.600px; fill: #c0392b; font-weight: bold; }
.icb { fill: #eef2f6; stroke: #6ea6d6; stroke-width: 1.200; }
.lnb { fill: none; stroke: #6ea6d6; stroke-width: 1; }
.wire { fill: none; stroke: #888; stroke-width: 1; }
.gate { fill: #e3e3e3; stroke: #555; stroke-width: 1; }
.cir text { font-size: 6.500px; font-weight: bold; fill: #333; }
.cir .s { font-size: 5px; }
.hd, .hd text { font-size: 4.300px; font-weight: bold; fill: #333; }
.num { font-size: 5.500px; font-weight: bold; fill: #333; }

/* chrome */
.island { background: #232329; border-radius: 8px; border: 0; color: #dcdcdc; }
button { font: inherit; padding: 0; }
.top { position: absolute; top: 0; left: 0; right: 0; display: flex; align-items: flex-start; padding: 9px 14px 0 8px; }
.menu { width: 32px; height: 33px; display: flex; align-items: center; justify-content: center; margin-top: 1px; }
.menu svg { width: 16px; height: 16px; }
svg:not(.canvas) { fill: none; stroke: currentColor; stroke-width: 1.600; stroke-linecap: round; stroke-linejoin: round; }
.center { margin-left: 247px; width: 494px; display: flex; flex-direction: column; align-items: stretch; }
.toolbar { height: 40px; background: #232329; border-radius: 8px; padding: 4px 4px 4px 3px; display: flex; align-items: center; gap: 4px; }
.tool { position: relative; width: 32px; height: 32px; border-radius: 8px; display: flex; align-items: center; justify-content: center; color: #d4d4d4; }
.tool svg { width: 16px; height: 16px; margin-right: 0; }
.tool b { position: absolute; right: 3px; bottom: 1px; font-size: 8px; font-weight: 400; color: #6f6f78; line-height: 10px; }
.tool.on { background: #45437c; color: #f0f0ff; }
.tool.on b { color: #d8d8f0; }
.fill { fill: currentColor; }
.thick { stroke-width: 2.500; }
.sep { width: 1px; height: 24px; background: #2e2e35; margin: 0 3px 0 4px; }
.ai { position: absolute; left: 17px; top: 22px; width: 16px; height: 11px; border-radius: 4px; background: #ffc2d1; color: #3a1c26; font: bold 7.500px/11px "DejaVu Serif", serif; text-align: center; }
.hint { margin: 10px 6px 0 -6px; font-size: 10.500px; line-height: 16px; color: #7c7c7c; text-align: center; white-space: nowrap; }
.actions { margin-left: auto; display: flex; gap: 12px; margin-top: 1px; }
.share { width: 48px; height: 32px; border: 0; border-radius: 8px; background: #a8a5ff; color: #2c2a5e; font-size: 12.500px; }
.library { width: 73px; height: 33px; display: flex; align-items: center; justify-content: center; gap: 7px; font-size: 12px; color: #d4d4d4; }
.library svg { width: 15px; height: 15px; stroke-width: 1.500; }
.bottom { position: absolute; left: 8px; right: 14px; bottom: 13px; display: flex; align-items: center; gap: 9px; }
.group { height: 32px; display: flex; align-items: center; }
.zoom { width: 118px; padding: 0 7px; justify-content: space-between; }
.history { width: 64px; padding: 0 8px; justify-content: space-between; }
.ctl { width: 16px; height: 16px; display: flex; color: #c8c8c8; }
.ctl svg { width: 16px; height: 16px; }
.ctl.off { color: #45454c; }
.pct { font-size: 13px; color: #e0e0e0; }
.shield { width: 16px; height: 19px; margin-left: auto; margin-right: 10px; margin-top: 3px; }
.shield .sh { fill: #a8a5ff; stroke: #a8a5ff; }
.shield .ck { stroke: #23233a; stroke-width: 2; }
.help { width: 32px; height: 33px; display: flex; align-items: center; justify-content: center; color: #bdbdbd; margin-top: -1px; }
.help svg { width: 16px; height: 16px; }
```
